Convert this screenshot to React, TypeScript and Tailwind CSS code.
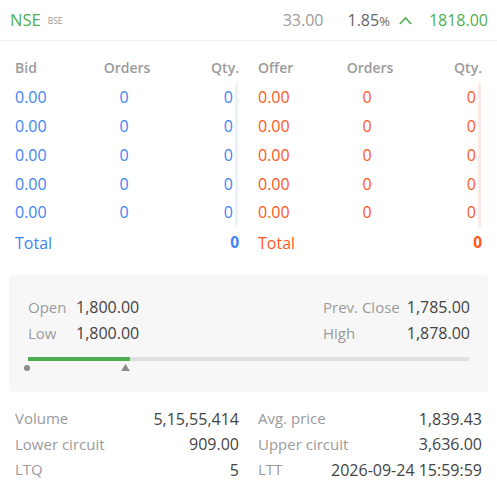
const bids = [0, 1, 2, 3, 4];

const Stat = ({ label, value }: { label: string; value: string }) => (
  <div className="flex justify-between items-center h-[25.5px]">
    <span className="text-[#9b9b9b]">{label}</span>
    <span className="text-[16px] text-[#444]">{value}</span>
  </div>
);

const App = () => {
  return (
    <div className="w-[497px] h-[492px] bg-white font-['Open_Sans',sans-serif] text-[15px] overflow-hidden">
      {/* header */}
      <div className="flex items-center h-[41px] pl-[10px] pr-[9px] border-b border-[#eeeeee]">
        <span className="text-[16.5px] text-[#4caf50]">NSE</span>
        <span className="ml-[7px] mt-[3px] text-[8.5px] text-[#9b9b9b]">BSE</span>
        <div className="ml-auto flex items-center text-[16px]">
          <span className="text-[#9b9b9b]">33.00</span>
          <span className="ml-[24px] text-[#666]">
            1.85<span className="text-[13px]">%</span>
          </span>
          <svg className="ml-[9px]" width="13" height="9" viewBox="0 0 13 9">
            <path d="M0.8 8 L6.5 2 L12.2 8" fill="none" stroke="#4caf50" strokeWidth="1.6" />
          </svg>
          <span className="ml-[17px] text-[#4caf50]">1818.00</span>
        </div>
      </div>

      {/* market depth */}
      <div className="grid grid-cols-2 gap-x-[19px] px-[15px] pt-[12px]">
        {(["bid", "offer"] as const).map((side) => {
          const color = side === "bid" ? "text-[#4184f3]" : "text-[#ff5722]";
          const bar = side === "bid" ? "border-[#ebf1fd]" : "border-[#fde9e4]";
          return (
            <div key={side}>
              <div className="grid grid-cols-3 h-[29px] items-center text-[14px] font-semibold text-[#9b9b9b]">
                <span>{side === "bid" ? "Bid" : "Offer"}</span>
                <span className="text-center">Orders</span>
                <span className="text-right">Qty.</span>
              </div>
              <div className={`border-r-[3px] ${bar} mr-[1px] mt-[1px] text-[16px]`}>
                {bids.map((i) => (
                  <div key={i} className={`grid grid-cols-3 h-[28.75px] items-center pr-[2px] ${color}`}>
                    <span>0.00</span>
                    <span className="text-center">0</span>
                    <span className="text-right">0</span>
                  </div>
                ))}
              </div>
              <div className={`flex justify-between items-center h-[32px] text-[16px] ${color}`}>
                <span>Total</span>
                <span className="font-bold text-[15.5px]">0</span>
              </div>
            </div>
          );
        })}
      </div>

      {/* ohlc panel */}
      <div className="mx-[9px] mt-[16px] h-[117px] bg-[#f7f7f7] rounded-[4px] pl-[19px] pr-[18px] pt-[19px]">
        <div className="flex justify-between">
          <div className="grid grid-cols-[48px_auto]">
            <span className="h-[26px] flex items-center text-[#9b9b9b]">Open</span>
            <span className="h-[26px] flex items-center text-[16px] text-[#444]">1,800.00</span>
            <span className="h-[26px] flex items-center text-[#9b9b9b]">Low</span>
            <span className="h-[26px] flex items-center text-[16px] text-[#444]">1,800.00</span>
          </div>
          <div className="grid grid-cols-[auto_auto] gap-x-[7px]">
            <span className="h-[26px] flex items-center text-[#9b9b9b]">Prev. Close</span>
            <span className="h-[26px] flex items-center justify-end text-[16px] text-[#444]">1,785.00</span>
            <span className="h-[26px] flex items-center text-[#9b9b9b]">High</span>
            <span className="h-[26px] flex items-center justify-end text-[16px] text-[#444]">1,878.00</span>
          </div>
        </div>
        <div className="mt-[11px] flex h-[4px] mr-[1px]">
          <div className="w-[102px] bg-[#4caf50]" />
          <div className="flex-1 bg-[#e0e0e0]" />
        </div>
        <div className="flex items-center mt-[3px] h-[8px]">
          <div className="w-[6px] h-[6px] rounded-full bg-[#8c8c8c] ml-[-4px]" />
          <svg className="ml-[91px]" width="9" height="7" viewBox="0 0 9 7">
            <path d="M4.5 0 L9 7 L0 7 Z" fill="#8c8c8c" />
          </svg>
        </div>
      </div>

      {/* stats */}
      <div className="grid grid-cols-2 gap-x-[19px] px-[15px] pt-[14px]">
        <div>
          <Stat label="Volume" value="5,15,55,414" />
          <Stat label="Lower circuit" value="909.00" />
          <Stat label="LTQ" value="5" />
        </div>
        <div>
          <Stat label="Avg. price" value="1,839.43" />
          <Stat label="Upper circuit" value="3,636.00" />
          <Stat label="LTT" value="2026-09-24 15:59:59" />
        </div>
      </div>
    </div>
  );
};

export default App;
